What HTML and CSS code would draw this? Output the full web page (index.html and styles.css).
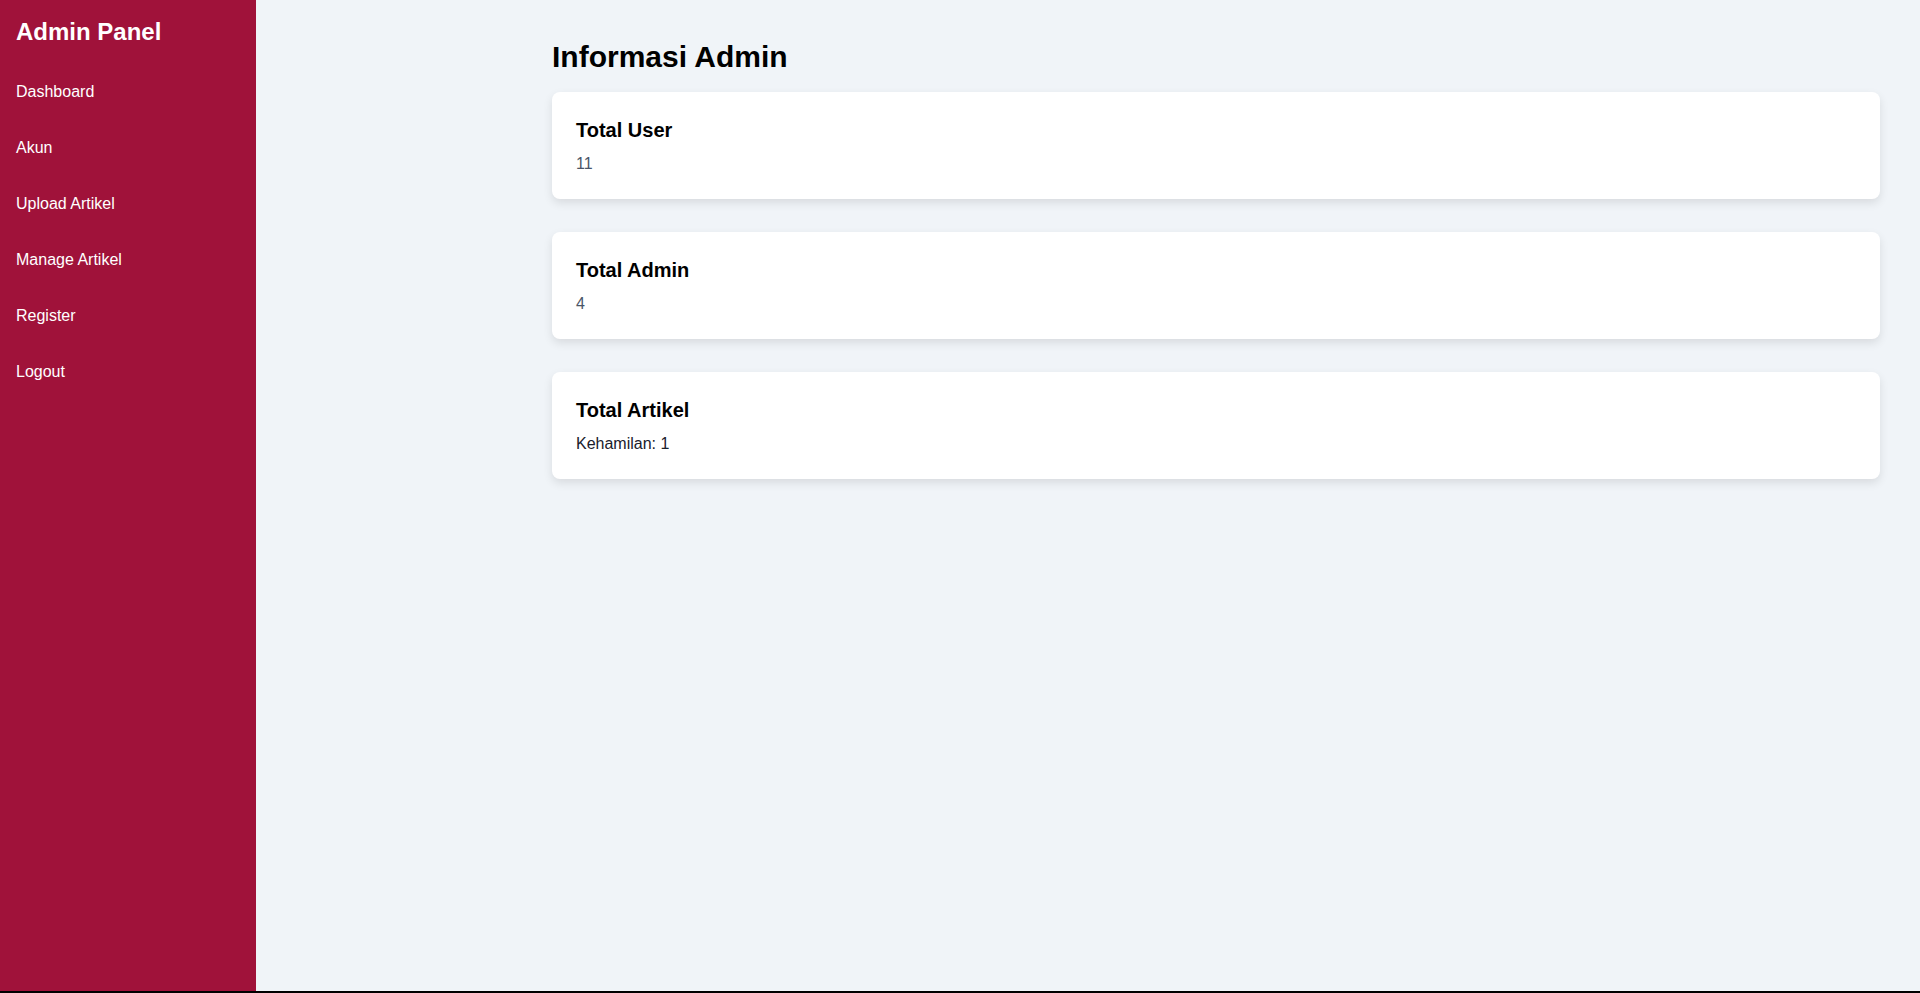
FILE: index.html
```html
<!DOCTYPE html>
<html lang="id">
<head>
<meta charset="utf-8">
<title>Admin Panel</title>
<link rel="stylesheet" href="styles.css">
</head>
<body>
<div class="layout">
  <aside class="sidebar">
    <h2 class="brand">Admin Panel</h2>
    <nav class="nav">
      <a href="#" class="nav-link">Dashboard</a>
      <a href="#" class="nav-link">Akun</a>
      <a href="#" class="nav-link">Upload Artikel</a>
      <a href="#" class="nav-link">Manage Artikel</a>
      <a href="#" class="nav-link">Register</a>
      <a href="#" class="nav-link">Logout</a>
    </nav>
  </aside>
  <main class="main">
    <h1 class="page-title">Informasi Admin</h1>
    <div class="cards">
      <section class="card">
        <h3 class="card-title">Total User</h3>
        <p class="card-value">11</p>
      </section>
      <section class="card">
        <h3 class="card-title">Total Admin</h3>
        <p class="card-value">4</p>
      </section>
      <section class="card">
        <h3 class="card-title">Total Artikel</h3>
        <div class="card-list">Kehamilan: 1</div>
      </section>
    </div>
  </main>
</div>
</body>
</html>
```

FILE: styles.css
```css
html {
  background: #000;
}
body {
  margin: 0;
  font-family: "Liberation Sans", Arial, sans-serif;
  background: #000;
}
.layout {
  display: flex;
  height: calc(100vh - 2px);
  background: #f0f4f8;
}
.sidebar {
  width: 256px;
  flex-shrink: 0;
  box-sizing: border-box;
  padding: 18px 16px 16px;
  background: #a0123a;
  color: #fff;
}
.brand {
  margin: 0 0 26px;
  font-size: 24px;
  font-weight: bold;
  line-height: 27.6px;
}
.nav {
  display: flex;
  flex-direction: column;
  gap: 16px;
}
.nav-link {
  display: block;
  padding: 10px 0;
  color: #fff;
  text-decoration: none;
  font-size: 16px;
  line-height: 20px;
}
.main {
  flex: 1;
  margin-left: 256px;
  padding: 40px;
  min-width: 0;
}
.page-title {
  margin: 0 0 17.5px;
  font-size: 30px;
  font-weight: bold;
  line-height: 34.5px;
  color: #000;
}
.cards {
  display: flex;
  flex-direction: column;
  gap: 32.5px;
}
.card {
  background: #fff;
  border-radius: 8px;
  padding: 27px 24px 26px;
  box-shadow: 0 4px 10px rgba(0, 0, 0, 0.1);
}
.card-title {
  margin: 0;
  font-size: 20px;
  line-height: 23px;
  font-weight: bold;
  color: #000;
}
.card-value {
  margin: 13px 0 0;
  font-size: 16px;
  line-height: 18.4px;
  color: #4a5568;
}
.card-list {
  margin-top: 13px;
  font-size: 16px;
  line-height: 18.4px;
  color: #1a202c;
}
```
